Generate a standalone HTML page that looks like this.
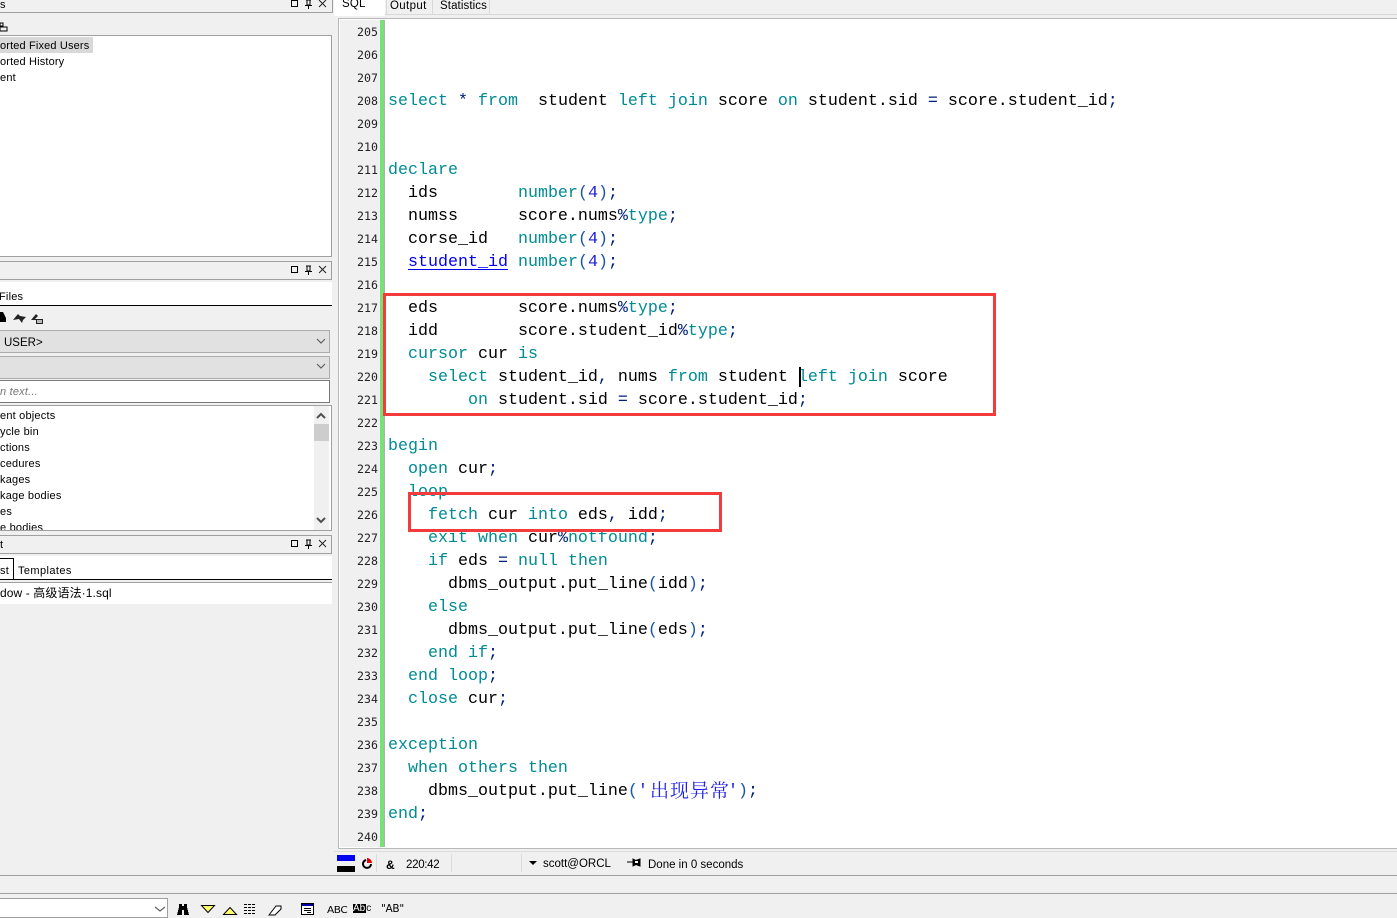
<!DOCTYPE html>
<html><head><meta charset="utf-8">
<style>
html,body{margin:0;padding:0}
body{width:1397px;height:916px;overflow:hidden;background:#f0f0f0;position:relative;font-family:"Liberation Sans","Noto Sans CJK SC",sans-serif;font-size:11px;color:#000}
.a{position:absolute}
.t{position:absolute;white-space:pre;line-height:16px;font-size:11px;letter-spacing:.2px}
.c{position:absolute;left:388px;white-space:pre;font-family:"Liberation Mono","Noto Sans CJK SC",monospace;font-size:16.67px;line-height:23px;height:23px;color:#000}
.n{position:absolute;left:340px;width:38px;text-align:right;font-family:"DejaVu Sans Mono",monospace;font-size:11.6px;line-height:23px;color:#222}
i{font-style:normal}
.k{color:#008b94}.p{color:#00207a}.b{color:#1a55a8}.d{color:#2020e0}
.u{color:#0000f0;text-decoration:underline;text-underline-offset:3px}
.s{color:#2020f0}
</style></head><body>

<!-- left panels -->
<div class="a" style="left:0;top:12px;width:332px;height:1px;background:#a0a0a0"></div>
<div class="a" style="left:332px;top:0;width:1px;height:13px;background:#a0a0a0"></div>
<div class="t" style="left:0;top:-3px">s</div>
<svg class="a" style="left:0;top:20px" width="8" height="12"><path d="M0 3h3v3H0zM0 7h7v4H0z" fill="none" stroke="#000"/></svg>
<div class="a" style="left:0;top:35px;width:332px;height:222px;background:#fff;border:1px solid #a0a0a0;border-left:0;box-sizing:border-box"></div>
<div class="a" style="left:0;top:37px;width:93px;height:16px;background:#d9d9d9"></div>
<div class="t" style="left:0;top:38px;letter-spacing:.15px">orted Fixed Users</div>
<div class="t" style="left:0;top:54px;letter-spacing:.15px">orted History</div>
<div class="t" style="left:0;top:70px">ent</div>

<div class="a" style="left:0;top:261px;width:332px;height:19px;border:1px solid #a0a0a0;border-left:0;box-sizing:border-box"></div>
<div class="a" style="left:0;top:282px;width:332px;height:23px;background:#fff;border-bottom:1px solid #000"></div>
<div class="t" style="left:-1px;top:289px">Files</div>
<svg class="a" style="left:0;top:311px" width="46" height="14"><path d="M0 1h3l3 6v4H0z" fill="#000"/><path d="M13 9l5-6 2 2 6 1-3 3-1 3-3-4z" fill="#222"/><path d="M31 9l5-6 2 2-3 3h8v5h-7v-4z" fill="#222"/><path d="M37 9h5v3h-5z" fill="#bbb"/></svg>
<div class="a" style="left:0;top:330px;width:330px;height:23px;background:#e1e1e1;border:1px solid #adadad;border-left:0;box-sizing:border-box"></div>
<div class="t" style="left:4px;top:335px;font-size:11.5px;letter-spacing:0">USER&gt;</div>
<div class="a" style="left:0;top:356px;width:330px;height:23px;background:#e1e1e1;border:1px solid #adadad;border-left:0;box-sizing:border-box"></div>
<svg class="a" style="left:316px;top:337px" width="10" height="36"><path d="M1 2l4 4 4-4M1 27l4 4 4-4" fill="none" stroke="#606060" stroke-width="1.2"/></svg>
<div class="a" style="left:0;top:380px;width:330px;height:23px;background:#fff;border:1px solid #7a7a7a;border-left:0;box-sizing:border-box"></div>
<div class="t" style="left:0;top:384px;font-style:italic;color:#777">n text...</div>
<div class="a" style="left:0;top:405px;width:332px;height:126px;background:#fff;border:1px solid #a0a0a0;border-left:0;box-sizing:border-box;overflow:hidden">
 <div class="a" style="left:314px;top:0;width:15px;height:124px;background:#f0f0f0"></div>
 <div class="a" style="left:314px;top:18px;width:15px;height:17px;background:#cdcdcd"></div>
 <svg class="a" style="left:316px;top:6px" width="11" height="112"><path d="M1 6l4-4 4 4M1 106l4 4 4-4" fill="none" stroke="#505050" stroke-width="2"/></svg>
 <div class="t" style="left:0;top:2px">ent objects</div>
 <div class="t" style="left:0;top:18px">ycle bin</div>
 <div class="t" style="left:0;top:34px">ctions</div>
 <div class="t" style="left:0;top:50px">cedures</div>
 <div class="t" style="left:0;top:66px">kages</div>
 <div class="t" style="left:0;top:82px">kage bodies</div>
 <div class="t" style="left:0;top:98px">es</div>
 <div class="t" style="left:0;top:114px">e bodies</div>
</div>
<div class="a" style="left:0;top:535px;width:332px;height:19px;border:1px solid #a0a0a0;border-left:0;box-sizing:border-box"></div>
<div class="t" style="left:0;top:537px">t</div>
<div class="a" style="left:0;top:556px;width:332px;height:23px;background:#fff;border-bottom:1px solid #000"></div>
<div class="a" style="left:0;top:558px;width:14px;height:22px;border:1px solid #000;border-left:0;border-bottom:0;box-sizing:border-box"></div>
<div class="t" style="left:0;top:563px">st</div>
<div class="t" style="left:18px;top:563px;letter-spacing:.4px">Templates</div>
<div class="a" style="left:0;top:582px;width:332px;height:1px;background:#a0a0a0"></div>
<div class="a" style="left:0;top:583px;width:332px;height:21px;background:#fff"></div>
<div class="t" style="left:0;top:585px;font-size:12px;letter-spacing:.1px">dow - 高级语法·1.sql</div>

<!-- panel buttons -->
<svg class="a" style="left:290px;top:0" width="40" height="552" fill="none" stroke="#000">
 <g transform="translate(0,-2)"><path d="M1.500 2.500h6v6h-6z"/><path d="M16 2h5M17 2v5h3V2M15 7.500h7M18.500 8v3"/><path d="M29 2l7 7M36 2l-7 7" stroke="#222"/></g>
 <g transform="translate(0,264)"><path d="M1.500 2.500h6v6h-6z"/><path d="M16 2h5M17 2v5h3V2M15 7.500h7M18.500 8v3"/><path d="M29 2l7 7M36 2l-7 7" stroke="#222"/></g>
 <g transform="translate(0,538)"><path d="M1.500 2.500h6v6h-6z"/><path d="M16 2h5M17 2v5h3V2M15 7.500h7M18.500 8v3"/><path d="M29 2l7 7M36 2l-7 7" stroke="#222"/></g>
</svg>

<!-- tabs -->
<div class="a" style="left:334px;top:0;width:1063px;height:14px;background:#f0f0f0;border-bottom:1px solid #d8d8d8"></div>
<div class="a" style="left:334px;top:0;width:51px;height:16px;background:#fff"></div>
<div class="a" style="left:386px;top:0;width:47px;height:14px;border-right:1px solid #d8d8d8;border-left:1px solid #d8d8d8;box-sizing:border-box"></div>
<div class="a" style="left:433px;top:0;width:57px;height:14px;border-right:1px solid #d8d8d8;box-sizing:border-box"></div>
<div class="t" style="left:342px;top:-4px;font-size:11.5px">SQL</div>
<div class="t" style="left:390px;top:-2px;font-size:11.5px;letter-spacing:.35px">Output</div>
<div class="t" style="left:440px;top:-2px;font-size:11.5px;letter-spacing:.1px">Statistics</div>

<!-- editor -->
<div class="a" style="left:338px;top:18px;width:1059px;height:831px;background:#fff;border:1px solid #b8b8b8;border-right:0;box-sizing:border-box"></div>
<div class="a" style="left:340px;top:20px;width:40px;height:827px;background:#f0f0f0"></div>
<div class="a" style="left:380px;top:20px;width:4px;height:827px;background:#78e078"></div>
<div class="a" style="left:384px;top:20px;width:1px;height:827px;background:#b0b0b0"></div>

<div class="n" style="top:20.5px">205</div><div class="n" style="top:43.5px">206</div><div class="n" style="top:66.5px">207</div><div class="n" style="top:89.5px">208</div><div class="n" style="top:112.5px">209</div><div class="n" style="top:135.5px">210</div><div class="n" style="top:158.5px">211</div><div class="n" style="top:181.5px">212</div><div class="n" style="top:204.5px">213</div><div class="n" style="top:227.5px">214</div><div class="n" style="top:250.5px">215</div><div class="n" style="top:273.5px">216</div><div class="n" style="top:296.5px">217</div><div class="n" style="top:319.5px">218</div><div class="n" style="top:342.5px">219</div><div class="n" style="top:365.5px">220</div><div class="n" style="top:388.5px">221</div><div class="n" style="top:411.5px">222</div><div class="n" style="top:434.5px">223</div><div class="n" style="top:457.5px">224</div><div class="n" style="top:480.5px">225</div><div class="n" style="top:503.5px">226</div><div class="n" style="top:526.5px">227</div><div class="n" style="top:549.5px">228</div><div class="n" style="top:572.5px">229</div><div class="n" style="top:595.5px">230</div><div class="n" style="top:618.5px">231</div><div class="n" style="top:641.5px">232</div><div class="n" style="top:664.5px">233</div><div class="n" style="top:687.5px">234</div><div class="n" style="top:710.5px">235</div><div class="n" style="top:733.5px">236</div><div class="n" style="top:756.5px">237</div><div class="n" style="top:779.5px">238</div><div class="n" style="top:802.5px">239</div><div class="n" style="top:825.5px">240</div>

<div class="c" style="top:90px"><i class="k">select</i> <i class="p">*</i> <i class="k">from</i>  student <i class="k">left join</i> score <i class="k">on</i> student.sid <i class="p">=</i> score.student_id<i class="p">;</i></div>
<div class="c" style="top:159px"><i class="k">declare</i></div>
<div class="c" style="top:182px">  ids        <i class="k">number</i><i class="b">(</i><i class="d">4</i><i class="b">)</i><i class="p">;</i></div>
<div class="c" style="top:205px">  numss      score.nums<i class="p">%</i><i class="k">type</i><i class="p">;</i></div>
<div class="c" style="top:228px">  corse_id   <i class="k">number</i><i class="b">(</i><i class="d">4</i><i class="b">)</i><i class="p">;</i></div>
<div class="c" style="top:251px">  <i class="u">student_id</i> <i class="k">number</i><i class="b">(</i><i class="d">4</i><i class="b">)</i><i class="p">;</i></div>
<div class="c" style="top:297px">  eds        score.nums<i class="p">%</i><i class="k">type</i><i class="p">;</i></div>
<div class="c" style="top:320px">  idd        score.student_id<i class="p">%</i><i class="k">type</i><i class="p">;</i></div>
<div class="c" style="top:343px">  <i class="k">cursor</i> cur <i class="k">is</i></div>
<div class="c" style="top:366px">    <i class="k">select</i> student_id<i class="p">,</i> nums <i class="k">from</i> student <i class="k">left join</i> score</div>
<div class="c" style="top:389px">        <i class="k">on</i> student.sid <i class="p">=</i> score.student_id<i class="p">;</i></div>
<div class="c" style="top:435px"><i class="k">begin</i></div>
<div class="c" style="top:458px">  <i class="k">open</i> cur<i class="p">;</i></div>
<div class="c" style="top:481px">  <i class="k">loop</i></div>
<div class="c" style="top:504px">    <i class="k">fetch</i> cur <i class="k">into</i> eds<i class="p">,</i> idd<i class="p">;</i></div>
<div class="c" style="top:527px">    <i class="k">exit when</i> cur<i class="p">%</i><i class="k">notfound</i><i class="p">;</i></div>
<div class="c" style="top:550px">    <i class="k">if</i> eds <i class="p">=</i> <i class="k">null then</i></div>
<div class="c" style="top:573px">      dbms_output.put_line<i class="b">(</i>idd<i class="b">)</i><i class="p">;</i></div>
<div class="c" style="top:596px">    <i class="k">else</i></div>
<div class="c" style="top:619px">      dbms_output.put_line<i class="b">(</i>eds<i class="b">)</i><i class="p">;</i></div>
<div class="c" style="top:642px">    <i class="k">end if</i><i class="p">;</i></div>
<div class="c" style="top:665px">  <i class="k">end loop</i><i class="p">;</i></div>
<div class="c" style="top:688px">  <i class="k">close</i> cur<i class="p">;</i></div>
<div class="c" style="top:734px"><i class="k">exception</i></div>
<div class="c" style="top:757px">  <i class="k">when others then</i></div>
<div class="c" style="top:780px">    dbms_output.put_line<i class="b">(</i><i class="s">'</i></div>
<div class="a" style="left:650px;top:778px;white-space:pre;font-family:'Noto Serif CJK SC',serif;font-size:19px;letter-spacing:1px;line-height:23px;color:#2020f0">出现异常</div>
<div class="c" style="left:728px;top:780px"><i class="s">'</i><i class="b">)</i><i class="p">;</i></div>
<div class="c" style="top:803px"><i class="k">end</i><i class="p">;</i></div>

<!-- caret -->
<div class="a" style="left:799px;top:367px;width:2px;height:20px;background:#000"></div>

<!-- red boxes -->
<div class="a" style="left:383px;top:293px;width:613px;height:123px;border:3px solid #f43b3b;box-sizing:border-box"></div>
<div class="a" style="left:408px;top:492px;width:314px;height:40px;border:3px solid #f43b3b;box-sizing:border-box"></div>

<!-- status bar -->
<div class="a" style="left:334px;top:851px;width:1063px;height:1px;background:#dcdcdc"></div>
<div class="a" style="left:337px;top:855px;width:18px;height:6px;background:#0000f0"></div>
<div class="a" style="left:337px;top:866px;width:18px;height:6px;background:#000"></div>
<svg class="a" style="left:361px;top:858px" width="12" height="12"><path d="M5 2a4 4 0 1 0 5 4" fill="none" stroke="#000" stroke-width="2"/><path d="M6 0a5 5 0 0 1 5 5H6z" fill="#e00000"/></svg>
<div class="a" style="left:376px;top:854px;width:1px;height:18px;background:#dcdcdc"></div>
<div class="a" style="left:451px;top:854px;width:1px;height:18px;background:#dcdcdc"></div>
<div class="a" style="left:521px;top:854px;width:1px;height:18px;background:#dcdcdc"></div>
<div class="t" style="left:386px;top:857px;font-weight:bold;font-size:12px">&amp;</div>
<div class="t" style="left:406px;top:857px;letter-spacing:-.3px;font-size:11.5px">220:42</div>
<svg class="a" style="left:529px;top:861px" width="8" height="5"><path d="M0 0h8L4 4z" fill="#000"/></svg>
<div class="t" style="left:543px;top:856px;font-size:11.5px;letter-spacing:0">scott@ORCL</div>
<svg class="a" style="left:627px;top:857px" width="15" height="11"><path d="M0 5h6M6 2v7l3-1.500 4 1.500V2L9 3.500z" fill="#000" stroke="#000"/><path d="M8 4h3v2H8z" fill="#fff"/></svg>
<div class="t" style="left:648px;top:857px;font-size:11.5px;letter-spacing:0">Done in 0 seconds</div>
<div class="a" style="left:0;top:875px;width:1397px;height:1px;background:#a0a0a0"></div>
<div class="a" style="left:0;top:893px;width:1397px;height:1px;background:#a0a0a0"></div>

<!-- bottom toolbar -->
<div class="a" style="left:0;top:898px;width:168px;height:20px;background:#fff;border:1px solid #a0a0a0;border-left:0;box-sizing:border-box"></div>
<svg class="a" style="left:154px;top:906px" width="12" height="7"><path d="M1 1l5 4 5-4" fill="none" stroke="#606060" stroke-width="1.2"/></svg>
<svg class="a" style="left:176px;top:902px" width="118" height="14" shape-rendering="crispEdges">
 <path d="M3 2h3v2h2V2h3v3l2 8H8V8H6v5H1l2-8z" fill="#000"/>
 <path d="M25.500 3.500h13l-6.500 7z" fill="#ffff70" stroke="#000" shape-rendering="auto"/>
 <path d="M47.500 12.500h13l-6.500-7z" fill="#ffff70" stroke="#000" shape-rendering="auto"/>
 <path d="M68 2.500h12M68 5.500h12M68 8.500h12M68 11.500h12" stroke="#000" stroke-dasharray="3 1"/>
 <path d="M93 13l7-9h5v3l-6 6h-6z" fill="#fff" stroke="#000" shape-rendering="auto"/>
</svg>
<svg class="a" style="left:301px;top:903px" width="14" height="13"><path d="M.5 .5h12v11H.5z" fill="#fff" stroke="#000"/><path d="M1 1h11v2H1z" fill="#0000a0"/><path d="M3 5.500h7M3 7.500h7M6 9.500h4" stroke="#000"/></svg>
<div class="t" style="left:327px;top:902px;font-size:10.5px;letter-spacing:-.4px;font-family:'DejaVu Sans',sans-serif;transform:scaleY(.95)">ABC</div>
<div class="a" style="left:353px;top:904px;width:13px;height:9px;background:#000"></div>
<div class="t" style="left:353px;top:901px;font-size:10px;letter-spacing:0;color:#fff">Ab<span style="color:#000;margin-left:1px">c</span></div>
<div class="t" style="left:381px;top:901px;font-size:10.5px;letter-spacing:-.3px;font-family:'DejaVu Sans',sans-serif">"AB"</div>
</body></html>
